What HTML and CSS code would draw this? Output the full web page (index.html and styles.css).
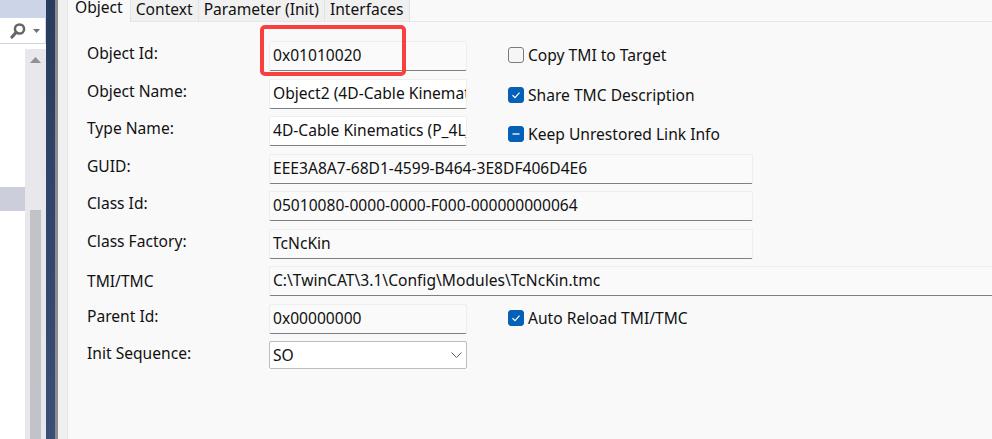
FILE: index.html
```html
<!DOCTYPE html>
<html lang="en">
<head>
<meta charset="utf-8">
<title>Object</title>
<link rel="stylesheet" href="styles.css">
</head>
<body>
<div class="app">
  <aside class="side">
    <div class="side-head"></div>
    <div class="side-search">
      <svg class="search-icon" width="20" height="20" viewBox="0 0 20 20"><circle cx="9.5" cy="8" r="4.6" fill="none" stroke="#666" stroke-width="2.5"/><path d="M6 11.5 2 16" stroke="#666" stroke-width="3.2" stroke-linecap="round"/></svg>
      <svg class="search-caret" width="7" height="4" viewBox="0 0 7 4"><path d="M0 0h7L3.5 4z" fill="#707070"/></svg>
    </div>
    <div class="side-body">
      <div class="tree">
        <div class="tree-sel"></div>
      </div>
      <div class="scroll">
        <svg class="scroll-up" width="11" height="6" viewBox="0 0 11 6"><path d="M5.5 0 11 6H0z" fill="#909098"/></svg>
        <div class="scroll-thumb"></div>
      </div>
    </div>
  </aside>
  <div class="band"></div>
  <div class="gutter"></div>
  <main class="main">
    <nav class="tabs">
      <span class="tab active">Object</span>
      <span class="tab">Context</span>
      <span class="tab">Parameter (Init)</span>
      <span class="tab">Interfaces</span>
    </nav>
    <div class="form">
      <div class="group">
        <div class="rows">
          <div class="row"><label class="lbl">Object Id:</label><div class="field short">0x01010020</div></div>
          <div class="row"><label class="lbl">Object Name:</label><div class="field short white">Object2 (4D-Cable Kinematics)</div></div>
          <div class="row"><label class="lbl">Type Name:</label><div class="field short white">4D-Cable Kinematics (P_4L_4D)</div></div>
        </div>
        <div class="checks">
          <div class="check"><span class="box"></span>Copy TMI to Target</div>
          <div class="check"><span class="box on"><svg width="12" height="12" viewBox="0 0 12 12"><path d="M2.5 6.2 5 8.6 9.5 3.6" fill="none" stroke="#fff" stroke-width="1.2"/></svg></span>Share TMC Description</div>
          <div class="check"><span class="box on"><svg width="12" height="12" viewBox="0 0 12 12"><path d="M2.5 6h7" stroke="#cfe0f4" stroke-width="1.6"/></svg></span>Keep Unrestored Link Info</div>
        </div>
      </div>
      <div class="row"><label class="lbl">GUID:</label><div class="field mid">EEE3A8A7-68D1-4599-B464-3E8DF406D4E6</div></div>
      <div class="row"><label class="lbl">Class Id:</label><div class="field mid">05010080-0000-0000-F000-000000000064</div></div>
      <div class="row"><label class="lbl">Class Factory:</label><div class="field mid">TcNcKin</div></div>
      <div class="row"><label class="lbl tmi">TMI/TMC</label><div class="field long">C:\TwinCAT\3.1\Config\Modules\TcNcKin.tmc</div></div>
      <div class="row">
        <label class="lbl">Parent Id:</label><div class="field short">0x00000000</div>
        <div class="check inline"><span class="box on"><svg width="12" height="12" viewBox="0 0 12 12"><path d="M2.5 6.2 5 8.6 9.5 3.6" fill="none" stroke="#fff" stroke-width="1.2"/></svg></span>Auto Reload TMI/TMC</div>
      </div>
      <div class="row">
        <label class="lbl">Init Sequence:</label>
        <div class="select">SO<svg width="11" height="6" viewBox="0 0 11 6"><path d="M.5.5l5 5 5-5" fill="none" stroke="#606060"/></svg></div>
      </div>
    </div>
    <div class="mark"></div>
  </main>
</div>
</body>
</html>
```
FILE: styles.css
```css
* { box-sizing: border-box; }
html, body { margin: 0; height: 100%; overflow: hidden; }
body { font-family: "Noto Sans", "Open Sans", sans-serif; font-size: 15.6px; color: #111; }
.app { display: flex; width: 992px; height: 439px; }

.side { width: 46px; display: flex; flex-direction: column; background: #fff; }
.side-head { height: 18px; background: #ccd5e8; }
.side-search { height: 26px; display: flex; align-items: center; padding: 0 4px 0 10px; gap: 3px; background: #fff; border-bottom: 1px solid #ccd5e8; border-right: 1px solid #ccd5e8; }
.search-caret { margin-top: 1px; }
.side-body { flex: 1; display: flex; padding-top: 5px; }
.tree { width: 25px; padding-top: 138px; }
.tree-sel { height: 24px; background: #cccedb; }
.scroll { width: 21px; background: #e8e8ec; display: flex; flex-direction: column; align-items: center; padding-top: 8px; }
.scroll-thumb { width: 11px; flex: 1; margin-top: 147px; background: #c2c3c9; }

.band { width: 9px; background: linear-gradient(#293b5f, #3a4f75); }
.gutter { width: 13px; background: #f0f0f0; border-left: 3px solid #8d8d8d; border-right: 1px solid #e6e6e6; }

.main { flex: 1; position: relative; background: #f9f9f9; min-width: 0; }
.tabs { display: flex; height: 22px; border-bottom: 1px solid #e6e6e6; }
.tab { padding: 0 5px; height: 21px; line-height: 19px; background: #f0f0f0; border-right: 1px solid #e2e2e2; white-space: nowrap; }
.tab.active { background: #f9f9f9; height: 22px; line-height: 15px; padding: 0 7px; }

.form { display: flex; flex-direction: column; gap: 7.5px; padding: 19px 0 0 19px; }
.group { display: flex; height: 105px; }
.rows { display: flex; flex-direction: column; gap: 7.5px; width: 421px; }
.row { display: flex; align-items: center; height: 30px; }
.lbl { width: 182px; flex: none; margin-top: -6px; white-space: nowrap; }
.lbl.tmi { margin-top: -1px; }
.field { height: 30px; padding: 0 3px; line-height: 26px; background: #fafafa; border: 1px solid #eeeeee; border-bottom: 1px solid #7f7f7f; border-radius: 2px; overflow: hidden; white-space: nowrap; flex: none; }
.field.white { background: #fff; }
.short { width: 198px; }
.mid { width: 484px; }
.long { width: 760px; border-right: 0; }
.checks { display: flex; flex-direction: column; gap: 16px; margin-top: 2px; }
.check { display: flex; align-items: center; height: 24px; gap: 4px; white-space: nowrap; }
.check.inline { margin-left: 41px; margin-top: -2px; }
.box { width: 16px; height: 16px; border: 1px solid #7c7c7c; border-radius: 3px; background: #f6f6f6; display: flex; align-items: center; justify-content: center; flex: none; }
.box.on { background: #0560b8; border-color: #0560b8; }
.select { width: 198px; height: 28px; margin-top: -2px; padding: 0 4px 0 3px; display: flex; align-items: center; justify-content: space-between; background: #fff; border: 1px solid #bdbdbd; border-radius: 2px; }

.mark { position: absolute; left: 192px; top: 25px; width: 146px; height: 51px; border: 4px solid #f9403f; border-radius: 5px; }
```
